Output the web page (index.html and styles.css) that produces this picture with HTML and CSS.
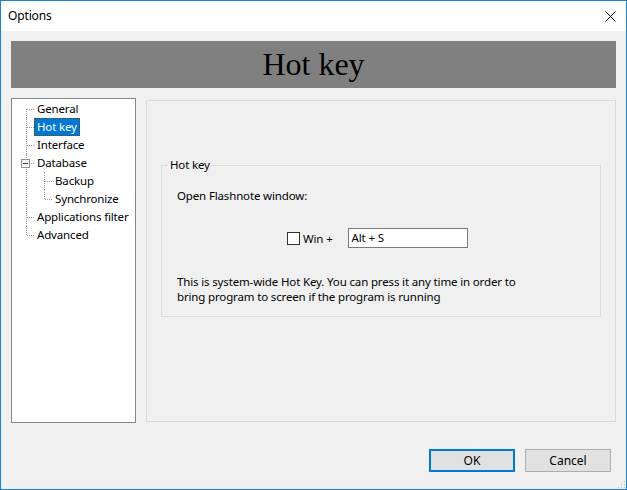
FILE: index.html
```html
<!DOCTYPE html>
<html lang="en">
<head>
    <meta charset="UTF-8">
    <title>Options</title>
    <link rel="stylesheet" href="styles.css">
</head>
<body>
    <div class="window">
        <div class="titlebar">
            <span class="title">Options</span>
            <svg class="close" width="11" height="11" viewBox="0 0 11 11">
                <path d="M0.5 0.5 L10.5 10.5 M10.5 0.5 L0.5 10.5" stroke="#000" stroke-width="1" fill="none"/>
            </svg>
        </div>

        <div class="content">
            <div class="page-header">Hot key</div>

            <div class="main">
                <ul class="tree">
                    <li><span class="label">General</span></li>
                    <li><span class="label selected">Hot key</span></li>
                    <li><span class="label">Interface</span></li>
                    <li>
                        <span class="toggle"></span>
                        <span class="label">Database</span>
                        <ul>
                            <li><span class="label">Backup</span></li>
                            <li><span class="label">Synchronize</span></li>
                        </ul>
                    </li>
                    <li><span class="label">Applications filter</span></li>
                    <li><span class="label">Advanced</span></li>
                </ul>

                <div class="panel">
                    <fieldset class="group">
                        <legend>Hot key</legend>
                        <p class="caption">Open Flashnote window:</p>
                        <div class="hotkey-row">
                            <label class="check"><span class="box"></span>Win +</label>
                            <div class="keybox">Alt + S</div>
                        </div>
                        <p class="note">This is system-wide Hot Key. You can press it any time in order to<br>bring program to screen if the program is running</p>
                    </fieldset>
                </div>
            </div>

            <div class="buttons">
                <button class="default">OK</button>
                <button>Cancel</button>
            </div>
        </div>
        <div class="grip"></div>
    </div>
</body>
</html>
```
FILE: styles.css
```css
body {
    margin: 0;
    font-family: "Noto Sans", sans-serif;
    font-size: 11.5px;
    letter-spacing: -0.15px;
    color: #000;
}

.window {
    position: relative;
    width: 627px;
    height: 490px;
    box-sizing: border-box;
    border: 1px solid #1883d7;
    background-color: #f0f0f0;
}

.titlebar {
    height: 30px;
    background: #fff;
    display: flex;
    align-items: center;
    justify-content: space-between;
    padding: 0 10px 0 7px;
}

    .titlebar .title {
        margin-top: -1px;
        font-size: 12px;
    }

.content {
    padding: 10px 10px 0 10px;
}

.page-header {
    height: 47px;
    background-color: #808080;
    font-family: "Liberation Serif", serif;
    font-size: 32px;
    letter-spacing: 0;
    line-height: 47px;
    text-align: center;
    color: #000;
}

.main {
    display: flex;
    gap: 10px;
    margin-top: 10px;
    align-items: flex-start;
}

.tree {
    width: 125px;
    height: 325px;
    box-sizing: border-box;
    border: 1px solid #828790;
    background: #fff;
    margin: 0;
    padding: 1px 0 0 0;
    list-style: none;
}

    .tree ul {
        list-style: none;
        margin: 0 0 0 -5px;
        padding: 0;
    }

    .tree li {
        position: relative;
        padding-left: 23px;
        line-height: 18px;
        white-space: nowrap;
    }

        .tree li::before {
            content: "";
            position: absolute;
            left: 14px;
            top: 0;
            height: 100%;
            border-left: 1px dotted #a0a0a0;
        }

        .tree li::after {
            content: "";
            position: absolute;
            left: 15px;
            top: 9px;
            width: 7px;
            border-top: 1px dotted #a0a0a0;
        }

        .tree > li:first-child::before {
            top: 9px;
            height: calc(100% - 9px);
        }

        .tree li:last-child::before {
            height: 9px;
        }

    .tree .label {
        padding: 0 2px;
        display: inline-block;
        line-height: 16px;
        border: 1px dotted transparent;
        margin-left: -1px;
    }

        .tree .label.selected {
            background-color: #0078d7;
            color: #fff;
            border-color: #6b4a10;
        }

    .tree .toggle {
        position: absolute;
        left: 9px;
        top: 5px;
        width: 9px;
        height: 9px;
        box-sizing: border-box;
        border: 1px solid #919191;
        background: #f7f7f7;
        z-index: 1;
    }

        .tree .toggle::after {
            content: "";
            position: absolute;
            left: 1px;
            top: 3px;
            width: 5px;
            border-top: 1px solid #3c3c50;
        }

.panel {
    margin-top: 2px;
    width: 470px;
    height: 322px;
    box-sizing: border-box;
    border: 1px solid #dadada;
    padding: 56px 14px 0 14px;
}

.group {
    margin: 0;
    height: 160px;
    box-sizing: border-box;
    border: 1px solid #dcdcdc;
    padding: 15px 15px 0 15px;
}

    .group legend {
        padding: 0 2px;
        margin-left: -9px;
        line-height: 16px;
    }

.caption {
    margin: 0;
    line-height: 16px;
}

.hotkey-row {
    display: flex;
    align-items: center;
    margin-top: 24px;
    padding-left: 110px;
}

.check {
    display: flex;
    align-items: center;
}

    .check .box {
        width: 13px;
        height: 13px;
        box-sizing: border-box;
        border: 1px solid #333;
        background: #fff;
        margin-right: 3px;
    }

.keybox {
    margin-left: 15px;
    width: 120px;
    height: 20px;
    box-sizing: border-box;
    border: 1px solid #7a7a7a;
    background: #fff;
    padding-left: 3px;
    line-height: 18px;
}

.note {
    margin: 26px 0 0 0;
    line-height: 15px;
}

.buttons {
    display: flex;
    justify-content: flex-end;
    gap: 10px;
    margin-top: 26px;
    padding-right: 5px;
}

button {
    width: 86px;
    height: 23px;
    box-sizing: border-box;
    font-family: "Noto Sans", sans-serif;
    font-size: 12px;
    background-color: #e1e1e1;
    border: 1px solid #adadad;
    color: #000;
    padding: 0;
}

    button.default {
        border: 2px solid #0078d7;
    }

.grip {
    position: absolute;
    right: 1px;
    bottom: 1px;
    width: 8px;
    height: 8px;
    background-image: radial-gradient(circle, #bcbcbc 0.8px, transparent 1px);
    background-size: 3px 3px;
    clip-path: polygon(100% 0, 100% 100%, 0 100%);
}
```
